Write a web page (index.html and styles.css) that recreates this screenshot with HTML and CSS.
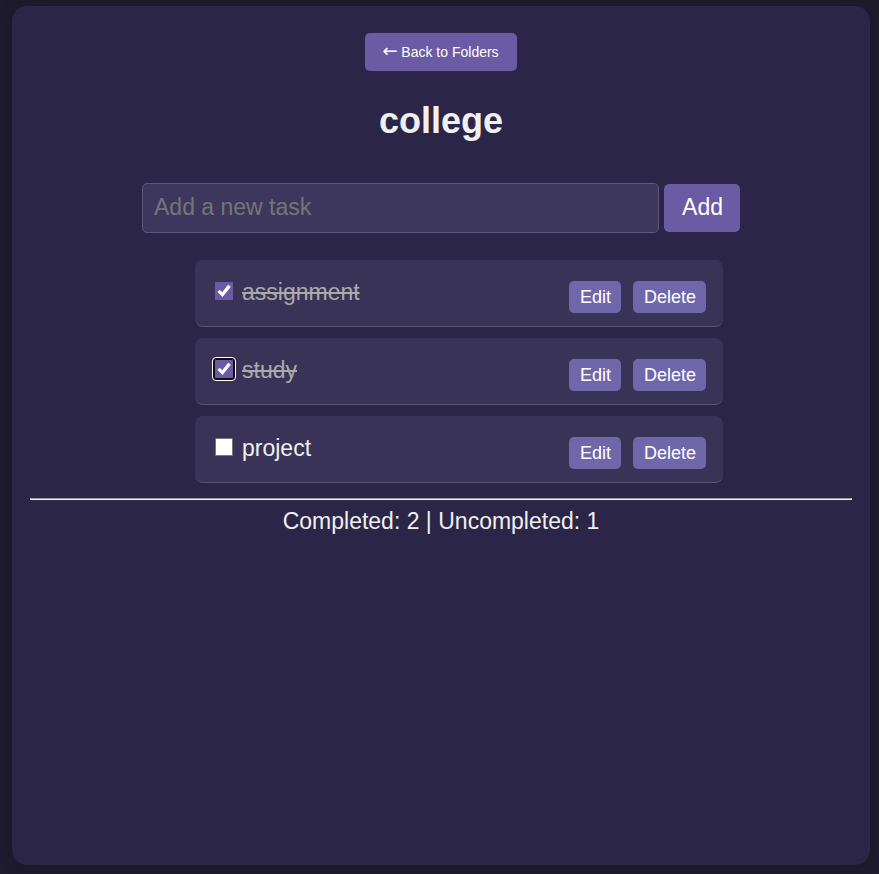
FILE: index.html
```html
<!DOCTYPE html>
<html lang="en">
<head>
<meta charset="utf-8">
<meta name="viewport" content="width=device-width, initial-scale=1">
<title>college</title>
<link rel="stylesheet" href="styles.css">
</head>
<body>
<main class="panel">
  <button type="button" class="btn back"><span class="arrow">←</span> Back to Folders</button>
  <h1 class="title">college</h1>
  <form class="task-form">
    <input class="task-input" type="text" placeholder="Add a new task" aria-label="Add a new task">
    <button type="button" class="btn add">Add</button>
  </form>
  <ul class="tasks">
    <li class="task done">
      <input class="check" type="checkbox" id="t1" checked>
      <label class="name" for="t1">assignment</label>
      <button type="button" class="btn small">Edit</button>
      <button type="button" class="btn small">Delete</button>
    </li>
    <li class="task done">
      <input class="check active" type="checkbox" id="t2" checked>
      <label class="name" for="t2">study</label>
      <button type="button" class="btn small">Edit</button>
      <button type="button" class="btn small">Delete</button>
    </li>
    <li class="task">
      <input class="check" type="checkbox" id="t3">
      <label class="name" for="t3">project</label>
      <button type="button" class="btn small">Edit</button>
      <button type="button" class="btn small">Delete</button>
    </li>
  </ul>
  <hr class="rule">
  <footer class="summary">Completed: 2 | Uncompleted: 1</footer>
</main>
</body>
</html>
```
FILE: styles.css
```css
* {
  box-sizing: border-box;
}

body {
  margin: 0;
  min-height: 100vh;
  padding: 6px 9px 9px 12px;
  display: flex;
  background: #1e1b2e;
  color: #f0f0f0;
  font-family: "Liberation Sans", Arial, sans-serif;
  font-size: 23px;
}

.panel {
  flex: 1;
  display: flex;
  flex-direction: column;
  align-items: center;
  padding: 27px 18px;
  border-radius: 15px;
  background: #2b2648;
  box-shadow: 0 0 15px rgba(0, 0, 0, 0.2);
}

.btn {
  border: 0;
  border-radius: 5px;
  background: #6b5ba4;
  color: #fff;
  font-family: inherit;
  cursor: pointer;
}

.back {
  height: 38px;
  padding: 0 18px 0 17px;
  font-size: 14px;
}

.arrow {
  font-family: "DejaVu Sans", sans-serif;
  font-size: 18px;
  line-height: 14px;
}

.title {
  margin: 29px 0 42px;
  font-size: 36px;
  line-height: 41px;
}

.task-form {
  display: flex;
  align-items: center;
  gap: 5px;
  width: 100%;
  max-width: 598px;
}

.task-input {
  flex: 1;
  min-width: 0;
  height: 50px;
  padding: 0 11px 2px;
  border: 1px solid #5c5873;
  border-radius: 5px;
  background: #3d375e;
  color: #f0f0f0;
  font: inherit;
}

.task-input::placeholder {
  color: #757575;
}

.add {
  height: 48px;
  padding: 0 17px 2px 18px;
  font-size: 23px;
}

.tasks {
  display: flex;
  flex-direction: column;
  gap: 11px;
  width: 100%;
  max-width: 564px;
  margin: 27px 0 15px;
  padding: 0 0 0 36px;
  list-style: none;
}

.task {
  display: flex;
  align-items: center;
  height: 67px;
  padding: 0 17px 0 20px;
  border-bottom: 1px solid #5b5675;
  border-radius: 8px;
  background: #393358;
}

.check {
  appearance: none;
  width: 18px;
  height: 18px;
  margin: 0 9px 4px 0;
  border: 1px solid #767676;
  border-radius: 1px;
  background: #fff;
}

.check:checked {
  display: grid;
  border: 0;
  background: #6b5ba4;
}

.check:checked::before {
  content: "";
  background: #fff;
  clip-path: polygon(14% 55%, 26% 43%, 40% 57%, 73% 15%, 88% 27%, 42% 84%);
}

.check.active {
  outline: 1px solid #fff;
  outline-offset: 2px;
  box-shadow: 0 0 0 2px #101010;
}

.name {
  flex: 1;
  padding-bottom: 2px;
}

.done .name {
  color: #aaa;
  text-decoration: line-through;
}

.small {
  height: 32px;
  margin: 8px 0 0 12px;
  padding: 0 10px 0 11px;
  background: #7067aa;
  font-size: 18px;
}

.rule {
  width: 100%;
  margin: 0;
  border: 1px solid #eee;
  border-top-color: #9a9a9a;
}

.summary {
  padding-top: 8px;
  line-height: 26px;
  text-align: center;
}
```
